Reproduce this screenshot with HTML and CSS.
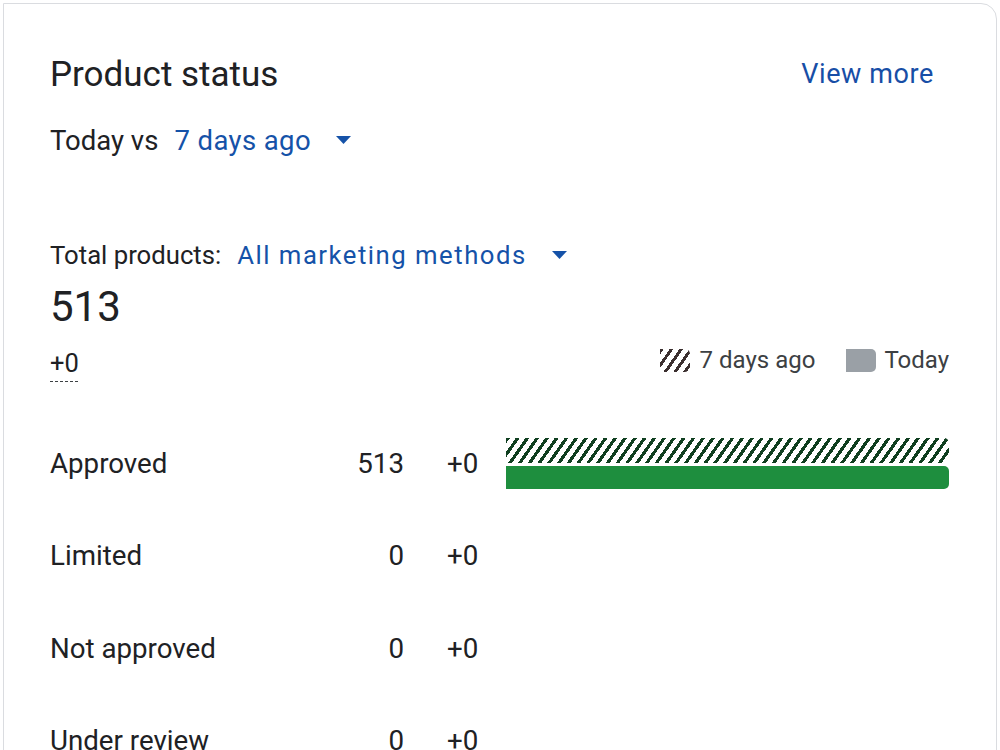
FILE: index.html
```html
<!DOCTYPE html>
<html lang="en">
<head>
  <meta charset="UTF-8">
  <meta name="viewport" content="width=device-width, initial-scale=1.0">
  <title>Product status</title>
  <link rel="stylesheet" href="styles.css">
</head>
<body>
  <section class="card">
    <header class="card-header">
      <h1>Product status</h1>
      <a class="link" href="#">View more</a>
    </header>

    <div class="compare">
      <span>Today vs</span>
      <button class="picker">7 days ago
        <svg class="caret" width="15" height="8" viewBox="0 0 15 8"><path d="M0 0h15L7.5 8z"/></svg>
      </button>
    </div>

    <div class="total">
      <span>Total products:</span>
      <button class="picker picker-wide">All marketing methods
        <svg class="caret" width="15" height="8" viewBox="0 0 15 8"><path d="M0 0h15L7.5 8z"/></svg>
      </button>
    </div>
    <div class="total-count">513</div>

    <div class="legend-row">
      <span class="delta-total">+0</span>
      <div class="legend">
        <span class="swatch swatch-hatch"></span>
        <span>7 days ago</span>
        <span class="swatch swatch-today"></span>
        <span>Today</span>
      </div>
    </div>

    <div class="status-list">
      <div class="status-row">
        <span class="label">Approved</span>
        <span class="count">513</span>
        <span class="delta">+0</span>
        <div class="bars">
          <div class="bar bar-before" style="width: 100%"></div>
          <div class="bar bar-now" style="width: 100%"></div>
        </div>
      </div>
      <div class="status-row">
        <span class="label">Limited</span>
        <span class="count">0</span>
        <span class="delta">+0</span>
        <div class="bars"></div>
      </div>
      <div class="status-row">
        <span class="label">Not approved</span>
        <span class="count">0</span>
        <span class="delta">+0</span>
        <div class="bars"></div>
      </div>
      <div class="status-row">
        <span class="label">Under review</span>
        <span class="count">0</span>
        <span class="delta">+0</span>
        <div class="bars"></div>
      </div>
    </div>
  </section>
</body>
</html>
```

FILE: styles.css
```css
body {
  margin: 0;
  background: #fff;
  font-family: Roboto, "Liberation Sans", Arial, sans-serif;
  color: #202124;
  overflow: hidden;
}
.card {
  margin: 3px 3px 0 3px;
  min-height: 800px;
  border: 1px solid #dadce0;
  border-radius: 0 16px 0 0;
  padding: 50px 47px 0 46px;
}
.card-header {
  display: flex;
  justify-content: space-between;
  align-items: center;
  height: 40px;
}
.card-header h1 {
  margin: 0;
  font-size: 35px;
  font-weight: 400;
}
.link {
  color: #174ea6;
  font-size: 27px;
  letter-spacing: 0.6px;
  text-decoration: none;
  margin-right: 15px;
}
.compare {
  margin-top: 30px;
  height: 32px;
  display: flex;
  align-items: center;
  font-size: 27.5px;
}
.total {
  margin-top: 84px;
  height: 30px;
  display: flex;
  align-items: center;
  font-size: 25.7px;
}
.picker {
  display: inline-flex;
  align-items: center;
  border: none;
  background: none;
  padding: 0;
  margin-left: 16px;
  font: inherit;
  letter-spacing: 0.4px;
  color: #1552a8;
  cursor: pointer;
}
.picker-wide {
  letter-spacing: 1.5px;
}
.caret {
  margin-left: 25px;
  fill: #1552a8;
}
.total-count {
  margin-top: 13px;
  height: 48px;
  line-height: 48px;
  font-size: 42px;
}
.legend-row {
  margin-top: 14px;
  display: flex;
  justify-content: space-between;
  align-items: center;
  height: 30px;
}
.delta-total {
  font-size: 25.5px;
  padding-bottom: 4px;
  margin-bottom: -10px;
  background: repeating-linear-gradient(90deg, #3c4043 0 3px, transparent 3px 5px) left bottom / 100% 1.5px no-repeat;
}
.legend {
  display: flex;
  align-items: center;
  font-size: 24px;
  color: #3c4043;
}
.swatch {
  width: 30px;
  height: 23px;
  border-radius: 0 5px 5px 0;
  margin-right: 10px;
}
.swatch-hatch {
  background: repeating-linear-gradient(125deg, #3b2f2f 0 3px, #fff 3px 8px);
}
.swatch-today {
  margin-left: 31px;
  margin-right: 8px;
  background: #9aa0a6;
}
.status-list {
  margin-top: 42px;
}
.status-row {
  display: grid;
  grid-template-columns: 290px 64px 102px 1fr;
  align-items: center;
  height: 92.5px;
  font-size: 27.7px;
}
.count {
  text-align: right;
}
.delta {
  padding-left: 43px;
}
.bars {
  display: flex;
  flex-direction: column;
  gap: 3px;
}
.bar {
  border-radius: 0 5px 5px 0;
}
.bar-before {
  height: 25px;
  background: repeating-linear-gradient(125deg, #103f20 0 3.2px, #fff 3.2px 8px);
}
.bar-now {
  height: 23px;
  background: #1e8e3e;
}
```
